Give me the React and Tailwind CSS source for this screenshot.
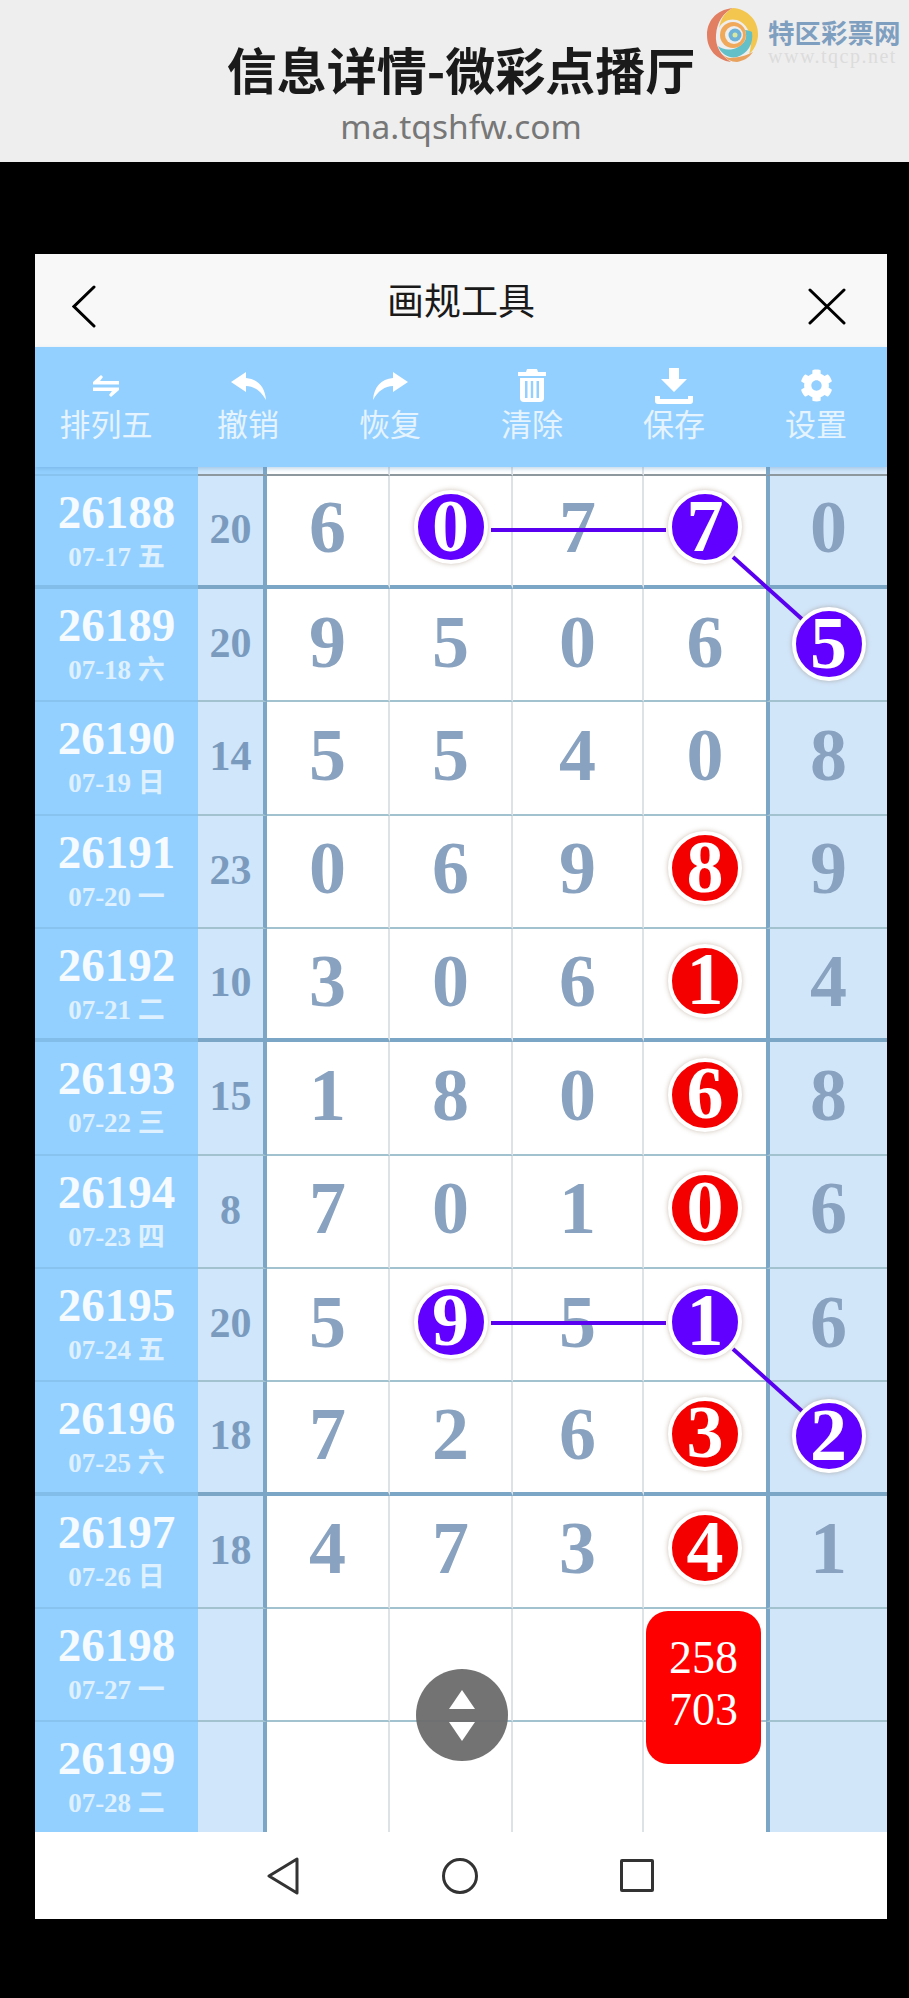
import { FaCog } from "react-icons/fa";

const rows = [
  { no: "26188", date: "07-17 五", sum: "20", nums: ["6", "0", "7", "7", "0"], marks: { 1: "p", 3: "p" }, thick: true },
  { no: "26189", date: "07-18 六", sum: "20", nums: ["9", "5", "0", "6", "5"], marks: { 4: "p" } },
  { no: "26190", date: "07-19 日", sum: "14", nums: ["5", "5", "4", "0", "8"], marks: {} },
  { no: "26191", date: "07-20 一", sum: "23", nums: ["0", "6", "9", "8", "9"], marks: { 3: "r" } },
  { no: "26192", date: "07-21 二", sum: "10", nums: ["3", "0", "6", "1", "4"], marks: { 3: "r" }, thick: true },
  { no: "26193", date: "07-22 三", sum: "15", nums: ["1", "8", "0", "6", "8"], marks: { 3: "r" } },
  { no: "26194", date: "07-23 四", sum: "8", nums: ["7", "0", "1", "0", "6"], marks: { 3: "r" } },
  { no: "26195", date: "07-24 五", sum: "20", nums: ["5", "9", "5", "1", "6"], marks: { 1: "p", 3: "p" } },
  { no: "26196", date: "07-25 六", sum: "18", nums: ["7", "2", "6", "3", "2"], marks: { 3: "r", 4: "p" }, thick: true },
  { no: "26197", date: "07-26 日", sum: "18", nums: ["4", "7", "3", "4", "1"], marks: { 3: "r" } },
  { no: "26198", date: "07-27 一", sum: "", nums: ["", "", "", "", ""], marks: {} },
  { no: "26199", date: "07-28 二", sum: "", nums: ["", "", "", "", ""], marks: {} },
];

const serif = "font-['Liberation_Serif','Noto_Sans_CJK_SC',serif]";
const gridCols = "grid grid-cols-[163px_69px_123px_123px_131px_122px_121px]";

function ExchangeIcon() {
  return (
    <svg width="28" height="22" viewBox="0 0 28 22" fill="#fff">
      <path d="M9 0 L1 7 L1 9.500 L27 9.500 L27 6 L8 6 L11 2 Z" />
      <path d="M19 22 L27 15 L27 12.500 L1 12.500 L1 16 L20 16 L17 20 Z" />
    </svg>
  );
}

function UndoIcon() {
  return (
    <svg width="35" height="28" viewBox="0 0 35 28" fill="#fff">
      <path d="M15 0 L0 10 L15 20 L15 14 C23 14 30 19 35 28 C34 15 27 7 15 6 Z" />
    </svg>
  );
}

function RedoIcon() {
  return (
    <svg width="35" height="28" viewBox="0 0 35 28" fill="#fff">
      <path d="M20 0 L35 10 L20 20 L20 14 C12 14 5 19 0 28 C1 15 8 7 20 6 Z" />
    </svg>
  );
}

function TrashIcon() {
  return (
    <svg width="30" height="33" viewBox="0 0 30 33" fill="#fff">
      <path d="M10 0 H20 L21 3 H29 V7 H1 V3 H9 Z" />
      <path d="M3 9 H27 V29 Q27 33 23 33 H7 Q3 33 3 29 Z M8 12 V29 H10.500 V12 Z M13.800 12 V29 H16.200 V12 Z M19.500 12 V29 H22 V12 Z" fillRule="evenodd" />
    </svg>
  );
}

function SaveIcon() {
  return (
    <svg width="38" height="36" viewBox="0 0 38 36" fill="#fff">
      <path d="M14 0 H24 V11 H32 L19 24 L6 11 H14 Z" />
      <path d="M0 28 H5 V31 H33 V28 H38 V33 Q38 36 35 36 H3 Q0 36 0 33 Z" />
    </svg>
  );
}

function ToolItem({ icon, label }) {
  return (
    <div className="flex flex-col items-center">
      <div className="flex h-[37px] items-center">{icon}</div>
      <div className="mt-[-1px] text-[31px] leading-[40px] text-[#e6f4ff]">{label}</div>
    </div>
  );
}

function Ball({ n, kind, low }) {
  const color = kind === "r" ? "bg-[#f50000]" : "bg-[#6200ff]";
  return (
    <div className={`relative z-20 flex h-[74px] w-[74px] items-center justify-center rounded-full border-[4px] border-white ${low ? "mt-[5px]" : ""} ${color} pb-[3px] text-[74px] font-bold leading-none text-white shadow-[0_0_5px_rgba(120,90,60,0.4)]`}>
      {n}
    </div>
  );
}

function Row({ row, short }) {
  let line = row.thick ? "border-b-[4px] border-[#7ba6c6]" : "border-b-[2px] border-[#a3c2cf]";
  if (short) line = "border-b-[2px] border-[#8d979e]";
  const sideLine = row.thick ? "border-b-[4px] border-[#82bdea]" : "border-b-[2px] border-[#88c2ee]";
  const height = short ? "h-[8.67px]" : "h-[113.33px]";
  return (
    <div className={`${gridCols} ${height} ${serif}`}>
      <div className={`flex flex-col items-center overflow-hidden bg-[#93d0ff] ${sideLine}`}>
        {!short && <div className="mt-[9px] text-[47px] font-bold leading-[54px] text-[#f6fbff]">{row.no}</div>}
        {!short && <div className="mt-[3px] text-[27px] font-bold leading-[30px] text-[#dff1ff]">{row.date}</div>}
      </div>
      <div className={`flex items-center justify-center overflow-hidden border-r-[4px] border-r-[#7ba6c6] bg-[#d0e6fa] text-[42px] font-bold text-[#7a9bbe] ${short ? "" : "pb-[2px]"} ${line}`}>
        {row.sum}
      </div>
      {row.nums.map((n, i) => {
        const colCls = i === 4 ? "border-l-[4px] border-l-[#7ba6c6] bg-[#d2e6fa]" : i === 3 ? "bg-white" : "border-r-[2px] border-r-[#dce2e6] bg-white";
        return (
          <div key={i} className={`flex items-center justify-center overflow-visible ${colCls} ${line} ${short ? "" : "pb-[6px]"} text-[74px] font-bold leading-none text-[#88a2bf]`}>
            {row.marks[i] ? <Ball n={n} kind={row.marks[i]} low={i === 4} /> : n}
          </div>
        );
      })}
    </div>
  );
}

export default function App() {
  return (
    <div className="h-[1998px] w-[909px] overflow-hidden bg-black font-['Noto_Sans_CJK_SC',sans-serif]">
      <div className="relative h-[162px] bg-[#eeeeee] pl-[13px] pt-[34px] text-center">
        <h1 className="text-[50px] font-bold leading-[68px] text-[#1a1a1a]">信息详情-微彩点播厅</h1>
        <p className="font-['Noto_Sans',sans-serif] text-[33.500px] leading-[48px] text-[#777777]">ma.tqshfw.com</p>
        {/* watermark */}
        <div className="absolute left-[707px] top-[8px] flex items-start gap-[9px]">
          <svg width="52" height="54" viewBox="0 0 52 54">
            <path d="M26 0 C8 2 0 14 0 27 C0 42 10 52 24 54 C14 48 8 38 9 27 C10 14 16 5 26 0 Z" fill="#e27f62" />
            <path d="M26 0 C40 1 52 12 51 28 C50 36 47 42 42 46 C46 36 44 20 34 14 C26 9 16 12 12 20 C14 10 18 4 26 0 Z" fill="#f2c64f" />
            <path d="M45 24 C47 36 40 46 30 49 C22 51 14 46 11 38 C16 42 24 43 31 39 C38 35 41 30 38 22 C41 22 43 23 45 24 Z" fill="#63c0c8" />
            <path d="M30 54 C36 53 42 50 46 44 C42 46 36 49 24 50 C20 50 17 48 15 46 C19 51 24 54 30 54 Z" fill="#e9a25e" />
            <circle cx="26" cy="27" r="13" fill="#f0a95a" />
            <circle cx="27" cy="27" r="9" fill="#eeeeee" />
            <circle cx="28" cy="27" r="6.500" fill="#6fb2d8" />
            <circle cx="28" cy="27" r="2.500" fill="#d8e8a0" />
          </svg>
          <div className="mt-[7px] flex flex-col items-start">
            <div className="text-[26.500px] font-bold leading-[33px] text-[#7f9fc0]">特区彩票网</div>
            <div className="font-['Liberation_Serif',serif] text-[20px] leading-[16px] tracking-[1.500px] text-[#dcdcdc]">www.tqcp.net</div>
          </div>
        </div>
      </div>

      <div className="mx-[35px] mt-[92px] flex h-[1665px] w-[852px] flex-col overflow-hidden bg-white">
        <div className="flex h-[93px] items-center justify-between bg-[#f8f8f8]">
          <div className="mt-[11px] w-[120px] pl-[37px]">
            <svg width="24" height="43" viewBox="0 0 24 43" fill="none" stroke="#000" strokeWidth="3" strokeLinecap="round">
              <path d="M22 2 L2 21.500 L22 41" />
            </svg>
          </div>
          <div className="mb-[2px] text-[37px] leading-none text-[#1a1a1a]">画规工具</div>
          <div className="mt-[11px] flex w-[120px] justify-end pr-[41px]">
            <svg width="38" height="37" viewBox="0 0 38 37" fill="none" stroke="#000" strokeWidth="3" strokeLinecap="round">
              <path d="M2 2 L36 35 M36 2 L2 35" />
            </svg>
          </div>
        </div>

        <div className="relative z-30 grid h-[120px] grid-cols-6 items-start bg-[#93d0ff] pt-[20px] shadow-[0_2px_4px_rgba(90,150,200,0.35)]">
          <ToolItem icon={<ExchangeIcon />} label="排列五" />
          <ToolItem icon={<UndoIcon />} label="撤销" />
          <ToolItem icon={<RedoIcon />} label="恢复" />
          <ToolItem icon={<TrashIcon />} label="清除" />
          <ToolItem icon={<SaveIcon />} label="保存" />
          <ToolItem icon={<FaCog size={33} color="#fff" />} label="设置" />
        </div>

        <div className="relative h-[1365px] overflow-hidden">
          <Row row={{ no: "", date: "", sum: "", nums: ["", "", "", "", ""], marks: {} }} short />
          {rows.map((row) => (
            <Row key={row.no} row={row} />
          ))}

          {/* connecting lines between the marked balls */}
          <svg className="absolute left-0 top-0 z-10" width="852" height="1365" fill="none" stroke="#5a00f0" strokeWidth="4">
            <path d="M456 63 H631" />
            <path d="M698 90 L768 153" />
            <path d="M456 856 H631" />
            <path d="M698 882 L768 945" />
          </svg>

          <div className={`absolute left-[611px] top-[1144px] z-20 flex h-[153px] w-[115px] flex-col items-center justify-center rounded-[22px] bg-[#ff0000] pb-[8px] text-[46px] leading-[52px] text-white ${serif}`}>
            <div>258</div>
            <div>703</div>
          </div>

          <div className="absolute left-[381px] top-[1202px] z-20 flex h-[92px] w-[92px] flex-col items-center justify-center gap-[13px] rounded-full bg-[#6c6c6c]/95">
            <svg width="26" height="19" viewBox="0 0 26 19" fill="#fff">
              <path d="M13 0 L26 19 H0 Z" />
            </svg>
            <svg width="26" height="19" viewBox="0 0 26 19" fill="#fff">
              <path d="M13 19 L26 0 H0 Z" />
            </svg>
          </div>
        </div>

        <div className="flex h-[87px] items-center justify-center bg-white pr-[2px]">
          <div className="flex w-[177px] justify-center">
            <svg width="32" height="38" viewBox="0 0 32 38" fill="none" stroke="#333" strokeWidth="3" strokeLinejoin="round">
              <path d="M30 2 V36 L2 19 Z" />
            </svg>
          </div>
          <div className="flex w-[177px] justify-center">
            <div className="h-[36px] w-[36px] rounded-full border-[3px] border-[#333]" />
          </div>
          <div className="flex w-[177px] justify-center">
            <div className="h-[33px] w-[34px] rounded-[2px] border-[3px] border-[#333]" />
          </div>
        </div>
      </div>
    </div>
  );
}
